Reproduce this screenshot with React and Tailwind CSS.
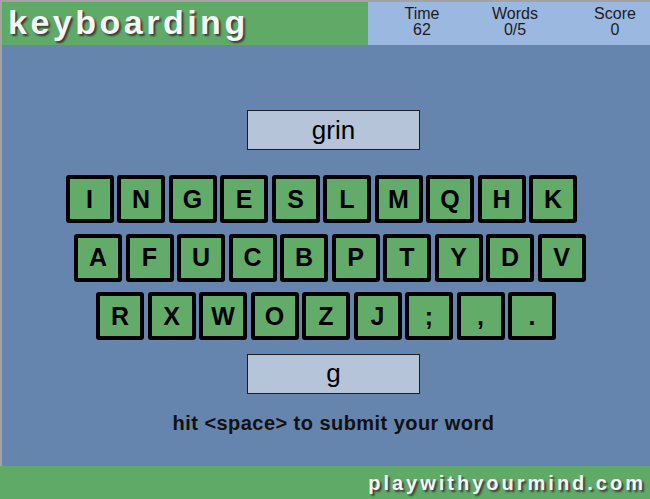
const rows = [
  { pad: 'pl-0', keys: ['I', 'N', 'G', 'E', 'S', 'L', 'M', 'Q', 'H', 'K'] },
  { pad: 'pl-[8.5px]', keys: ['A', 'F', 'U', 'C', 'B', 'P', 'T', 'Y', 'D', 'V'] },
  { pad: 'pl-[30.5px]', keys: ['R', 'X', 'W', 'O', 'Z', 'J', ';', ',', '.'] },
]

const stats = [
  { label: 'Time', value: '62' },
  { label: 'Words', value: '0/5' },
  { label: 'Score', value: '0' },
]

function Key({ ch }) {
  return (
    <div className="w-[48px] h-[48px] shrink-0 border-4 border-black rounded-[3px] bg-[#62ab69] flex items-center justify-center text-[25px] font-bold text-black leading-none">
      {ch}
    </div>
  )
}

export default function App() {
  return (
    <div className="w-[650px] h-[499px] flex flex-col overflow-hidden font-['Liberation_Sans',Arial,sans-serif]">

      {/* Header */}
      <div className="h-[45px] shrink-0 flex border-t-2 border-l-2 border-[#a3a3a3]">
        <div className="flex-1 bg-[#60aa68] pl-[6px] pt-[1px]">
          <span className="text-[34px] font-bold tracking-[3.5px] leading-[38px] text-[#f6f6f6] [text-shadow:2px_2px_2px_#3a3a3a]">
            keyboarding
          </span>
        </div>
        <div className="w-[282px] bg-[#9ab8e0] flex pl-[24px] pt-[3.5px]">
          <div className="flex gap-[33px]">
            {stats.map((s, i) => (
              <div key={s.label} className={`w-[60px] flex flex-col items-center text-[16px] leading-[16px] text-[#1c1c1c] ${i === 2 ? 'ml-[7px]' : ''}`}>
                <span>{s.label}</span>
                <span>{s.value}</span>
              </div>
            ))}
          </div>
        </div>
      </div>

      {/* Play area */}
      <div className="flex-1 bg-[#6584ae] border-l-2 border-[#a3a3a3] flex flex-col">
        <div className="ml-[245px] mt-[65px] w-[173px] h-[40px] border border-[#1e1e1e] bg-[#b5c4d9] flex items-center justify-center text-[26px] text-black">
          grin
        </div>

        <div className="ml-[63.5px] mt-[25px] flex flex-col gap-[10.5px]">
          {rows.map((r, i) => (
            <div key={i} className={`flex gap-[3.5px] ${r.pad}`}>
              {r.keys.map((k) => <Key key={k} ch={k} />)}
            </div>
          ))}
        </div>

        <div className="ml-[245px] mt-[13.5px] w-[173px] flex flex-col items-center">
          <div className="w-[173px] h-[40px] border border-[#1e1e1e] bg-[#b5c4d9] flex items-center justify-center text-[26px] text-black">
            g
          </div>
          <div className="mt-[17px] whitespace-nowrap text-[20px] tracking-[0.45px] leading-[24px] font-bold text-[#111]">
            hit &lt;space&gt; to submit your word
          </div>
        </div>
      </div>

      {/* Footer */}
      <div className="h-[33px] shrink-0 bg-[#60aa68] flex items-center justify-end pr-[4px]">
        <span className="text-[20px] font-bold tracking-[3px] leading-[24px] text-[#f6f6f6] [text-shadow:2px_2px_2px_#3a3a3a]">
          playwithyourmind.com
        </span>
      </div>
    </div>
  )
}
